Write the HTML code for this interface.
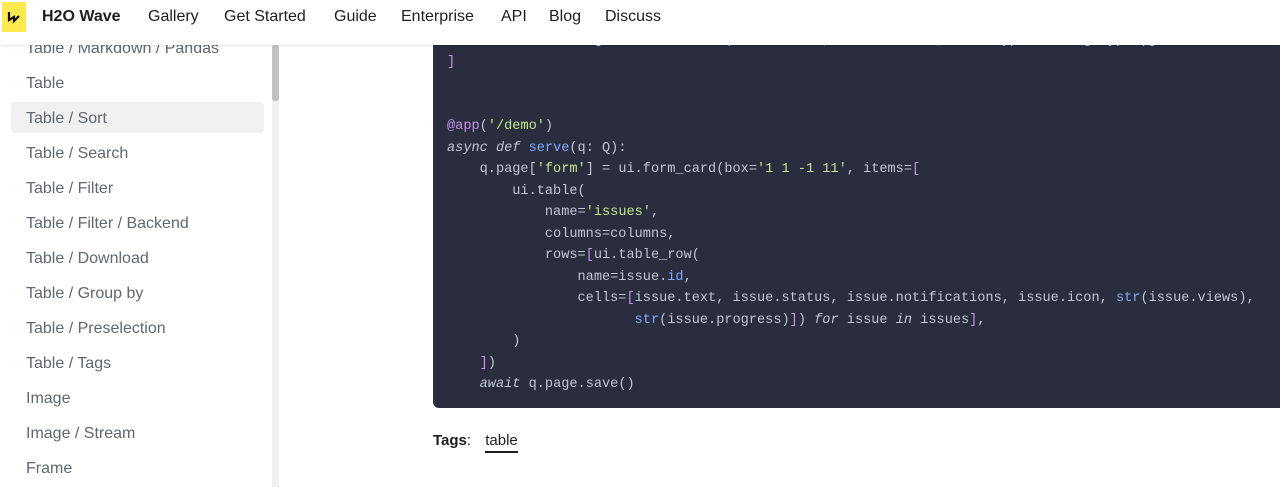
<!DOCTYPE html>
<html><head><style>
*{margin:0;padding:0;box-sizing:border-box}
body{width:1280px;height:487px;overflow:hidden;background:#fff;font-family:"Liberation Sans",sans-serif;position:relative}
.hdr{position:absolute;left:0;top:0;width:1280px;height:45px;background:#fff;box-shadow:0 1px 3px rgba(0,0,0,.12);z-index:5}
.logo{position:absolute;left:2px;top:2px;width:24px;height:30px;background:#fee94e}
.hdr span{position:absolute;top:8px;font-size:16px;color:#1c1e21}
.side{position:absolute;left:0;top:46px;width:272px;height:442px}
.side div{position:absolute;left:26px;font-size:16px;color:#606770}
.sel{position:absolute;left:11px;top:102px;width:253px;height:31px;background:#f0f0f0;border-radius:4px}
.track{position:absolute;left:272px;top:45px;width:7px;height:442px;background:#f1f1f1}
.thumb{position:absolute;left:272px;top:45px;width:7px;height:56px;background:#c1c1c1;border-radius:3px}
.code{position:absolute;left:433px;top:30px;width:860px;height:378px;background:#292d3e;border-radius:6px;overflow:hidden}
pre{position:absolute;left:14px;top:0px;font-family:"Liberation Mono",monospace;font-size:13.6px;line-height:21.5px;color:#bfc7d5}
.p{color:#c792ea}.g{color:#c3e88d}.b{color:#82aaff}.i{font-style:italic;color:#bfc7d5}
.tags{position:absolute;left:433px;top:432px;font-size:15px;color:#1c1e21}
.tags b{font-weight:bold}
.tags u{text-decoration:none;border-bottom:2px solid #1c1e21;padding-bottom:2px;margin-left:10px}
</style></head><body>
<div class="hdr">
<div class="logo"><svg width="24" height="30" viewBox="0 0 24 30"><path d="M7 10 V18 L12 15 V19 L17 14" fill="none" stroke="#111" stroke-width="2.2"/></svg></div>
<span style="left:42px;font-weight:bold">H2O Wave</span>
<span style="left:148px">Gallery</span>
<span style="left:224px">Get Started</span>
<span style="left:334px">Guide</span>
<span style="left:401px">Enterprise</span>
<span style="left:501px">API</span>
<span style="left:549px">Blog</span>
<span style="left:605px">Discuss</span>
</div>
<div class="side">
<div style="top:-6px">Table / Markdown / Pandas</div>
</div>
<div class="sel"></div>
<div class="side" style="top:1px">
<div style="top:74px">Table</div>
<div style="top:109px">Table / Sort</div>
<div style="top:144px">Table / Search</div>
<div style="top:179px">Table / Filter</div>
<div style="top:214px">Table / Filter / Backend</div>
<div style="top:249px">Table / Download</div>
<div style="top:284px">Table / Group by</div>
<div style="top:319px">Table / Preselection</div>
<div style="top:354px">Table / Tags</div>
<div style="top:389px">Image</div>
<div style="top:424px">Image / Stream</div>
<div style="top:459px">Frame</div>
</div>
<div class="track"></div><div class="thumb"></div>
<div class="code"><pre>        columns = [ui.table_column(name='text', label='Text', data_type='string_type')]
<span class="p">]</span>


<span class="p">@app</span>(<span class="g">'/demo'</span>)
<span class="i">async def</span> <span class="b">serve</span>(q: Q):
    q.page[<span class="g">'form'</span>] = ui.form_card(box=<span class="g">'1 1 -1 11'</span>, items=<span class="p">[</span>
        ui.table(
            name=<span class="g">'issues'</span>,
            columns=columns,
            rows=<span class="p">[</span>ui.table_row(
                name=issue.<span class="b">id</span>,
                cells=<span class="p">[</span>issue.text, issue.status, issue.notifications, issue.icon, <span class="b">str</span>(issue.views),
                       <span class="b">str</span>(issue.progress)<span class="p">]</span>) <span class="i">for</span> issue <span class="i">in</span> issues<span class="p">]</span>,
        )
    <span class="p">]</span>)
    <span class="i">await</span> q.page.save()</pre></div>
<div class="tags"><b>Tags</b>: <u>table</u></div>
</body></html>
